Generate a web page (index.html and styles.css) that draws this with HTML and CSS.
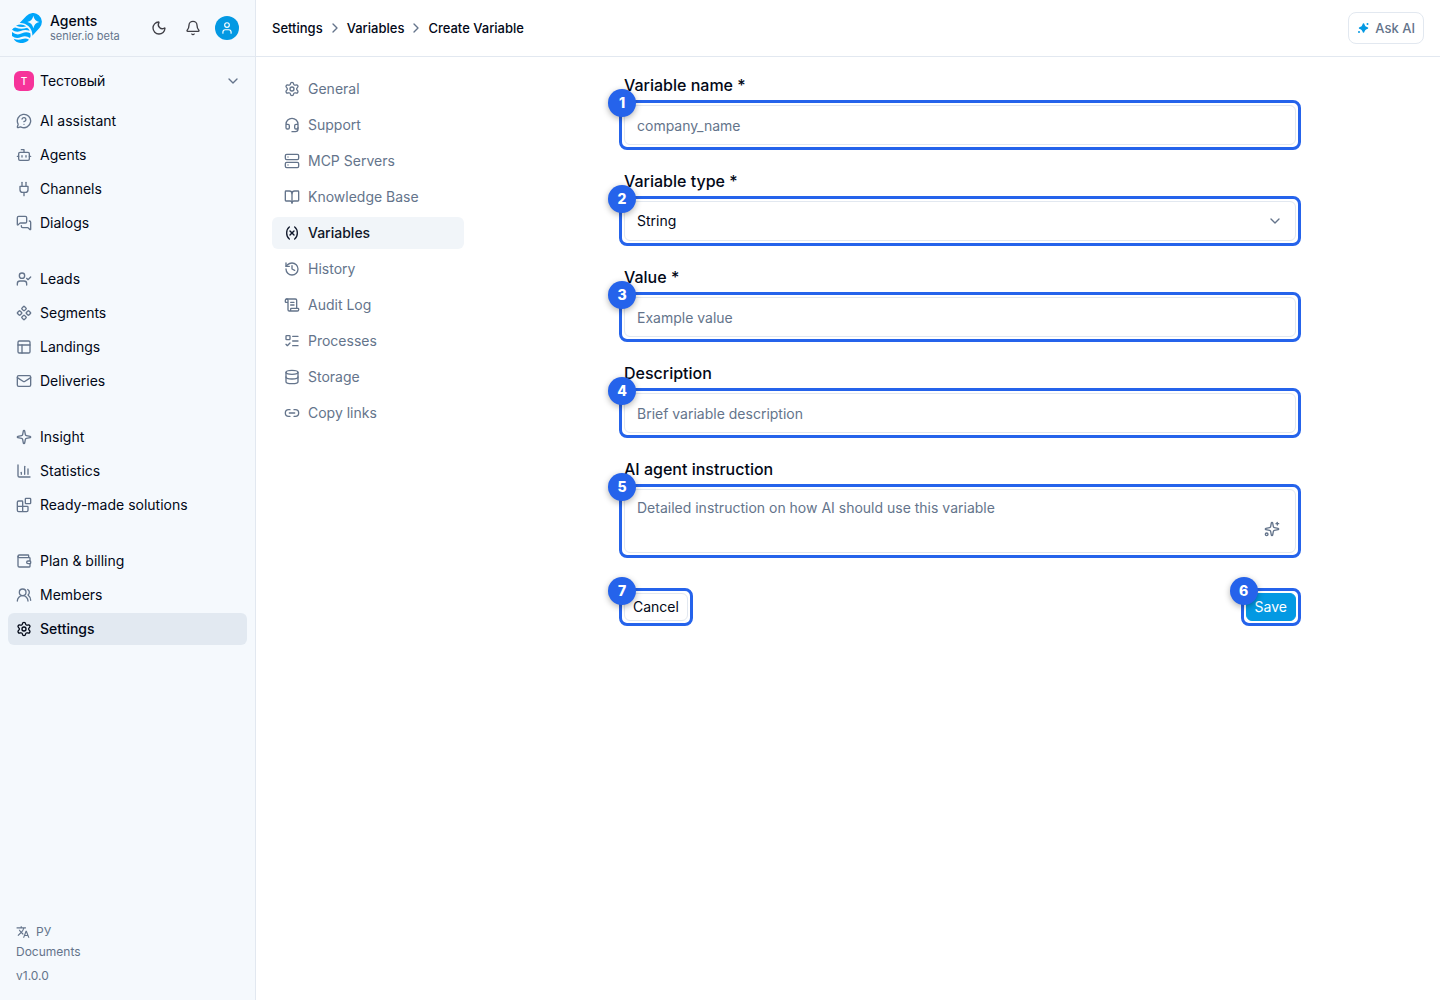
FILE: index.html
```html
<!DOCTYPE html>
<html lang="en">
<head>
<meta charset="utf-8">
<meta name="viewport" content="width=device-width, initial-scale=1">
<title>Create Variable</title>
<link rel="stylesheet" href="styles.css">
</head>
<body>
<div class="app">
  <aside class="sidebar">
    <header class="brand">
      <svg class="logo" viewBox="0 0 90 90" aria-hidden="true">
        <path fill="#00a6fb" d="M43 9A26 26 0 0 1 83 44L61 68A36 36 0 0 0 23 30Z"/>
        <path fill="#f5f9fd" d="M64 8Q67 24 82 27Q67 30 64 46Q61 30 46 27Q61 24 64 8Z"/>
        <path fill="#00a6fb" d="M12 38Q28 30 43 40Q30 45 12 38ZM0 50Q6 42 12 44Q28 50 45 44Q51 47 53 53Q38 48 26 54Q12 60 0 50ZM0 57Q14 69 30 61Q43 55 55 61Q57 68 54 75Q42 66 28 72Q12 79 0 69ZM5 77Q18 83 31 78Q42 74 51 80Q42 90 25 90Q11 88 5 77Z"/>
      </svg>
      <div class="brand-text">
        <strong>Agents</strong>
        <span>senler.io beta</span>
      </div>
      <div class="brand-actions">
        <button class="icon-btn" type="button" aria-label="Dark theme"><svg class="icon" viewBox="0 0 24 24"><path d="M20.985 12.486a9 9 0 1 1-9.473-9.472c.405-.022.617.46.402.803a6 6 0 0 0 8.268 8.268c.344-.215.825-.004.803.401"/></svg></button>
        <button class="icon-btn" type="button" aria-label="Notifications"><svg class="icon" viewBox="0 0 24 24"><path d="M10.268 21a2 2 0 0 0 3.464 0"/><path d="M3.262 15.326A1 1 0 0 0 4 17h16a1 1 0 0 0 .74-1.673C19.41 13.956 18 12.499 18 8A6 6 0 0 0 6 8c0 4.499-1.411 5.956-2.738 7.326"/></svg></button>
        <button class="avatar" type="button" aria-label="Account"><svg class="icon icon-sm" viewBox="0 0 24 24"><path d="M19 21v-2a4 4 0 0 0-4-4H9a4 4 0 0 0-4 4v2"/><circle cx="12" cy="7" r="4"/></svg></button>
      </div>
    </header>

    <button class="workspace" type="button">
      <span class="workspace-badge">T</span>
      <span class="workspace-name">Тестовый</span>
      <svg class="icon" viewBox="0 0 24 24"><path d="m6 9 6 6 6-6"/></svg>
    </button>

    <nav class="main-nav" aria-label="Main">
      <div class="nav-group">
        <a href="#"><svg class="icon" viewBox="0 0 24 24"><path d="M2.992 16.342a2 2 0 0 1 .094 1.167l-1.065 3.29a1 1 0 0 0 1.236 1.168l3.413-.998a2 2 0 0 1 1.099.092 10 10 0 1 0-4.777-4.719"/><path d="M9.09 9a3 3 0 0 1 5.83 1c0 2-3 3-3 3"/><path d="M12 17h.01"/></svg>AI assistant</a>
        <a href="#"><svg class="icon" viewBox="0 0 24 24"><path d="M12 8V4H8"/><rect width="16" height="12" x="4" y="8" rx="2"/><path d="M2 14h2"/><path d="M20 14h2"/><path d="M15 13v2"/><path d="M9 13v2"/></svg>Agents</a>
        <a href="#"><svg class="icon" viewBox="0 0 24 24"><path d="M12 22v-5"/><path d="M9 8V2"/><path d="M15 8V2"/><path d="M18 8v5a4 4 0 0 1-4 4h-4a4 4 0 0 1-4-4V8Z"/></svg>Channels</a>
        <a href="#"><svg class="icon" viewBox="0 0 24 24"><path d="M16 10a2 2 0 0 1-2 2H6.828a2 2 0 0 0-1.414.586l-2.202 2.202A.71.71 0 0 1 2 14.286V4a2 2 0 0 1 2-2h10a2 2 0 0 1 2 2z"/><path d="M20 9a2 2 0 0 1 2 2v10.286a.71.71 0 0 1-1.212.502l-2.202-2.202A2 2 0 0 0 17.172 19H10a2 2 0 0 1-2-2v-1"/></svg>Dialogs</a>
      </div>
      <div class="nav-group">
        <a href="#"><svg class="icon" viewBox="0 0 24 24"><path d="m16 11 2 2 4-4"/><path d="M16 21v-2a4 4 0 0 0-4-4H6a4 4 0 0 0-4 4v2"/><circle cx="9" cy="7" r="4"/></svg>Leads</a>
        <a href="#"><svg class="icon" viewBox="0 0 24 24"><path d="M15.536 11.293a1 1 0 0 0 0 1.414l2.376 2.377a1 1 0 0 0 1.414 0l2.377-2.377a1 1 0 0 0 0-1.414l-2.377-2.377a1 1 0 0 0-1.414 0z"/><path d="M2.297 11.293a1 1 0 0 0 0 1.414l2.377 2.377a1 1 0 0 0 1.414 0l2.377-2.377a1 1 0 0 0 0-1.414L6.088 8.916a1 1 0 0 0-1.414 0z"/><path d="M8.916 17.912a1 1 0 0 0 0 1.415l2.377 2.376a1 1 0 0 0 1.414 0l2.377-2.376a1 1 0 0 0 0-1.415l-2.377-2.376a1 1 0 0 0-1.414 0z"/><path d="M8.916 4.674a1 1 0 0 0 0 1.414l2.377 2.376a1 1 0 0 0 1.414 0l2.377-2.376a1 1 0 0 0 0-1.414l-2.377-2.377a1 1 0 0 0-1.414 0z"/></svg>Segments</a>
        <a href="#"><svg class="icon" viewBox="0 0 24 24"><rect width="18" height="18" x="3" y="3" rx="2"/><path d="M3 9h18"/><path d="M9 21V9"/></svg>Landings</a>
        <a href="#"><svg class="icon" viewBox="0 0 24 24"><path d="m22 7-8.991 5.727a2 2 0 0 1-2.009 0L2 7"/><rect x="2" y="4" width="20" height="16" rx="2"/></svg>Deliveries</a>
      </div>
      <div class="nav-group">
        <a href="#"><svg class="icon" viewBox="0 0 24 24"><path d="M11.017 2.814a1 1 0 0 1 1.966 0l1.051 5.558a2 2 0 0 0 1.594 1.594l5.558 1.051a1 1 0 0 1 0 1.966l-5.558 1.051a2 2 0 0 0-1.594 1.594l-1.051 5.558a1 1 0 0 1-1.966 0l-1.051-5.558a2 2 0 0 0-1.594-1.594l-5.558-1.051a1 1 0 0 1 0-1.966l5.558-1.051a2 2 0 0 0 1.594-1.594z"/></svg>Insight</a>
        <a href="#"><svg class="icon" viewBox="0 0 24 24"><path d="M3 3v16a2 2 0 0 0 2 2h16"/><path d="M18 17V9"/><path d="M13 17V5"/><path d="M8 17v-3"/></svg>Statistics</a>
        <a href="#"><svg class="icon" viewBox="0 0 24 24"><path d="M10 22V7a1 1 0 0 0-1-1H4a2 2 0 0 0-2 2v12a2 2 0 0 0 2 2h12a2 2 0 0 0 2-2v-5a1 1 0 0 0-1-1H2"/><rect x="14" y="2" width="8" height="8" rx="1"/></svg>Ready-made solutions</a>
      </div>
      <div class="nav-group">
        <a href="#"><svg class="icon" viewBox="0 0 24 24"><path d="M19 7V4a1 1 0 0 0-1-1H5a2 2 0 0 0 0 4h15a1 1 0 0 1 1 1v4h-3a2 2 0 0 0 0 4h3a1 1 0 0 0 1-1v-2a1 1 0 0 0-1-1"/><path d="M3 5v14a2 2 0 0 0 2 2h15a1 1 0 0 0 1-1v-4"/></svg>Plan &amp; billing</a>
        <a href="#"><svg class="icon" viewBox="0 0 24 24"><path d="M18 21a8 8 0 0 0-16 0"/><circle cx="10" cy="8" r="5"/><path d="M22 20c0-3.37-2-6.5-4-8a5 5 0 0 0-.45-8.3"/></svg>Members</a>
        <a href="#" class="active" aria-current="page"><svg class="icon" viewBox="0 0 24 24"><path d="M9.671 4.136a2.34 2.34 0 0 1 4.659 0 2.34 2.34 0 0 0 3.319 1.915 2.34 2.34 0 0 1 2.33 4.033 2.34 2.34 0 0 0 0 3.831 2.34 2.34 0 0 1-2.33 4.033 2.34 2.34 0 0 0-3.319 1.915 2.34 2.34 0 0 1-4.659 0 2.34 2.34 0 0 0-3.32-1.915 2.34 2.34 0 0 1-2.33-4.033 2.34 2.34 0 0 0 0-3.831A2.34 2.34 0 0 1 6.35 6.051a2.34 2.34 0 0 0 3.319-1.915"/><circle cx="12" cy="12" r="3"/></svg>Settings</a>
      </div>
    </nav>

    <footer class="sidebar-footer">
      <button class="language" type="button"><svg class="translate" viewBox="0 0 24 24"><path fill="currentColor" d="m12.87 15.07-2.54-2.51.03-.03A17.52 17.52 0 0 0 14.07 6H17V4h-7V2H8v2H1v2h11.17C11.5 7.92 10.44 9.75 9 11.35 8.07 10.32 7.3 9.19 6.69 8h-2c.73 1.63 1.73 3.17 2.98 4.56l-5.09 5.02L4 19l5-5 3.11 3.11zM18.5 10h-2L12 22h2l1.12-3h4.75L21 22h2zm-2.62 7 1.62-4.33L19.12 17z"/></svg>РУ</button>
      <a href="#">Documents</a>
      <span>v1.0.0</span>
    </footer>
  </aside>

  <div class="page">
    <header class="topbar">
      <nav class="breadcrumbs" aria-label="Breadcrumb">
        <a href="#">Settings</a>
        <svg class="icon" viewBox="0 0 24 24"><path d="m9 18 6-6-6-6"/></svg>
        <a href="#">Variables</a>
        <svg class="icon" viewBox="0 0 24 24"><path d="m9 18 6-6-6-6"/></svg>
        <span>Create Variable</span>
      </nav>
      <button class="ask-ai" type="button"><svg class="ask-icon" viewBox="0 0 24 24"><path fill="currentColor" d="M13 2.500Q14.500 2.500 15 5Q16 9 20 10Q22.500 10.500 22.500 12Q22.500 13.500 20 14Q16 15 15 19Q14.500 21.500 13 21.500Q11.500 21.500 11 19Q10 15 6 14Q3.500 13.500 3.500 12Q3.500 10.500 6 10Q10 9 11 5Q11.500 2.500 13 2.500Z"/><circle cx="21" cy="4" r="2" fill="currentColor"/><circle cx="4" cy="20" r="2" fill="currentColor"/></svg>Ask AI</button>
    </header>

    <div class="content">
      <nav class="settings-nav" aria-label="Settings">
        <a href="#"><svg class="icon" viewBox="0 0 24 24"><path d="M9.671 4.136a2.34 2.34 0 0 1 4.659 0 2.34 2.34 0 0 0 3.319 1.915 2.34 2.34 0 0 1 2.33 4.033 2.34 2.34 0 0 0 0 3.831 2.34 2.34 0 0 1-2.33 4.033 2.34 2.34 0 0 0-3.319 1.915 2.34 2.34 0 0 1-4.659 0 2.34 2.34 0 0 0-3.32-1.915 2.34 2.34 0 0 1-2.33-4.033 2.34 2.34 0 0 0 0-3.831A2.34 2.34 0 0 1 6.35 6.051a2.34 2.34 0 0 0 3.319-1.915"/><circle cx="12" cy="12" r="3"/></svg>General</a>
        <a href="#"><svg class="icon" viewBox="0 0 24 24"><path d="M3 11h3a2 2 0 0 1 2 2v3a2 2 0 0 1-2 2H5a2 2 0 0 1-2-2v-5Zm0 0a9 9 0 1 1 18 0m0 0v5a2 2 0 0 1-2 2h-1a2 2 0 0 1-2-2v-3a2 2 0 0 1 2-2h3Z"/><path d="M21 16v2a4 4 0 0 1-4 4h-5"/></svg>Support</a>
        <a href="#"><svg class="icon" viewBox="0 0 24 24"><rect width="20" height="8" x="2" y="2" rx="2"/><rect width="20" height="8" x="2" y="14" rx="2"/><path d="M6 6h.01"/><path d="M6 18h.01"/></svg>MCP Servers</a>
        <a href="#"><svg class="icon" viewBox="0 0 24 24"><path d="M12 7v14"/><path d="M3 18a1 1 0 0 1-1-1V4a1 1 0 0 1 1-1h5a4 4 0 0 1 4 4 4 4 0 0 1 4-4h5a1 1 0 0 1 1 1v13a1 1 0 0 1-1 1h-6a3 3 0 0 0-3 3 3 3 0 0 0-3-3z"/></svg>Knowledge Base</a>
        <a href="#" class="active" aria-current="page"><svg class="icon" viewBox="0 0 24 24"><path d="M8 21s-4-3-4-9 4-9 4-9"/><path d="M16 3s4 3 4 9-4 9-4 9"/><path d="m15 9-6 6"/><path d="m9 9 6 6"/></svg>Variables</a>
        <a href="#"><svg class="icon" viewBox="0 0 24 24"><path d="M3 12a9 9 0 1 0 9-9 9.75 9.75 0 0 0-6.74 2.74L3 8"/><path d="M3 3v5h5"/><path d="M12 7v5l4 2"/></svg>History</a>
        <a href="#"><svg class="icon" viewBox="0 0 24 24"><path d="M15 12h-5"/><path d="M15 8h-5"/><path d="M19 17V5a2 2 0 0 0-2-2H4"/><path d="M8 21h12a2 2 0 0 0 2-2v-1a1 1 0 0 0-1-1H11a1 1 0 0 0-1 1v1a2 2 0 1 1-4 0V5a2 2 0 1 0-4 0v2a1 1 0 0 0 1 1h3"/></svg>Audit Log</a>
        <a href="#"><svg class="icon" viewBox="0 0 24 24"><path d="M13 5h8"/><path d="M13 12h8"/><path d="M13 19h8"/><path d="m3 17 2 2 4-4"/><rect x="3" y="4" width="6" height="6" rx="1"/></svg>Processes</a>
        <a href="#"><svg class="icon" viewBox="0 0 24 24"><ellipse cx="12" cy="5" rx="9" ry="3"/><path d="M3 5v14a9 3 0 0 0 18 0V5"/><path d="M3 12a9 3 0 0 0 18 0"/></svg>Storage</a>
        <a href="#"><svg class="icon" viewBox="0 0 24 24"><path d="M9 17H7A5 5 0 0 1 7 7h2"/><path d="M15 7h2a5 5 0 1 1 0 10h-2"/><path d="M8 12h8"/></svg>Copy links</a>
      </nav>

      <main class="main">
        <form class="form">
          <div class="field">
            <label for="name">Variable name *</label>
            <div class="marked"><input id="name" class="control" type="text" placeholder="company_name"><span class="marker">1</span></div>
          </div>
          <div class="field">
            <label for="type">Variable type *</label>
            <div class="marked"><select id="type" class="control"><option>String</option></select><svg class="icon select-arrow" viewBox="0 0 24 24"><path d="m6 9 6 6 6-6"/></svg><span class="marker">2</span></div>
          </div>
          <div class="field">
            <label for="value">Value *</label>
            <div class="marked"><input id="value" class="control" type="text" placeholder="Example value"><span class="marker">3</span></div>
          </div>
          <div class="field">
            <label for="description">Description</label>
            <div class="marked"><input id="description" class="control" type="text" placeholder="Brief variable description"><span class="marker">4</span></div>
          </div>
          <div class="field">
            <label for="instruction">AI agent instruction</label>
            <div class="marked">
              <textarea id="instruction" class="control" placeholder="Detailed instruction on how AI should use this variable"></textarea>
              <button class="improve" type="button" aria-label="Improve with AI"><svg class="icon" viewBox="0 0 24 24"><path d="M11.017 2.814a1 1 0 0 1 1.966 0l1.051 5.558a2 2 0 0 0 1.594 1.594l5.558 1.051a1 1 0 0 1 0 1.966l-5.558 1.051a2 2 0 0 0-1.594 1.594l-1.051 5.558a1 1 0 0 1-1.966 0l-1.051-5.558a2 2 0 0 0-1.594-1.594l-5.558-1.051a1 1 0 0 1 0-1.966l5.558-1.051a2 2 0 0 0 1.594-1.594z"/><path d="M20 2v4"/><path d="M22 4h-4"/><circle cx="4" cy="20" r="2"/></svg></button>
              <span class="marker">5</span>
            </div>
          </div>
          <div class="form-actions">
            <div class="marked"><button class="btn" type="button">Cancel</button><span class="marker">7</span></div>
            <div class="marked"><button class="btn btn-primary" type="submit">Save</button><span class="marker">6</span></div>
          </div>
        </form>
      </main>
    </div>
  </div>
</div>
</body>
</html>
```
FILE: styles.css
```css
:root {
  --ink: #020817;
  --muted: #64748b;
  --line: #e2e8f0;
  --surface: #f5f9fd;
  --primary: #0399e3;
  --mark: #2563eb;
}

* { box-sizing: border-box; }

body {
  margin: 0;
  background: #fff;
  color: var(--ink);
  font: 14px/20px Inter, sans-serif;
}

a { color: inherit; text-decoration: none; }

button {
  padding: 0;
  border: 0;
  background: none;
  color: inherit;
  font: inherit;
  cursor: pointer;
}

.icon {
  flex: none;
  width: 16px;
  height: 16px;
  fill: none;
  stroke: currentColor;
  stroke-width: 2;
  stroke-linecap: round;
  stroke-linejoin: round;
}

.icon-sm { width: 14px; height: 14px; }

.app { display: flex; min-height: 100vh; }

/* Sidebar */
.sidebar {
  display: flex;
  flex: none;
  flex-direction: column;
  width: 256px;
  border-right: 1px solid var(--line);
  background: var(--surface);
}

.brand {
  display: flex;
  align-items: center;
  gap: 8px;
  height: 57px;
  padding: 0 16px 0 12px;
  border-bottom: 1px solid var(--line);
}

.logo { flex: none; width: 30px; height: 30px; }
.brand-text { display: flex; flex: 1; flex-direction: column; }
.brand-text strong { font-weight: 500; line-height: 16px; }
.brand-text span { color: var(--muted); font-size: 11px; line-height: 14px; }
.brand-actions { display: flex; align-items: center; gap: 10px; color: #3f3f46; }
.icon-btn { display: grid; place-items: center; width: 24px; height: 24px; }

.avatar {
  display: grid;
  place-items: center;
  width: 24px;
  height: 24px;
  border-radius: 50%;
  background: var(--primary);
  color: #fff;
}

.workspace {
  display: flex;
  align-items: center;
  gap: 6px;
  height: 32px;
  margin: 8px 8px 0;
  padding: 0 6px;
  text-align: left;
}

.workspace .icon { color: var(--muted); }
.workspace-name { flex: 1; }

.workspace-badge {
  width: 20px;
  height: 20px;
  border-radius: 6px;
  background: #f6339a;
  color: #fff;
  font-size: 10px;
  font-weight: 500;
  text-align: center;
}

.main-nav {
  display: flex;
  flex: 1;
  flex-direction: column;
  gap: 24px;
  padding: 8px;
}

.nav-group { display: flex; flex-direction: column; gap: 2px; }

.nav-group a,
.settings-nav a {
  display: flex;
  align-items: center;
  gap: 8px;
  height: 32px;
  padding: 0 8px;
  border-radius: 6px;
}

.nav-group .icon { color: var(--muted); }
.nav-group .active { background: #e2e9f1; font-weight: 500; }
.nav-group .active .icon { color: var(--ink); }

.sidebar-footer {
  display: flex;
  flex-direction: column;
  align-items: flex-start;
  padding: 0 16px 14px;
  color: var(--muted);
  font-size: 12px;
}

.language { display: flex; align-items: center; gap: 6px; }
.translate { width: 14px; height: 14px; }
.sidebar-footer span { margin-top: 4px; }

/* Page */
.page { display: flex; flex: 1; flex-direction: column; min-width: 0; }

.topbar {
  display: flex;
  align-items: center;
  justify-content: space-between;
  height: 57px;
  padding: 0 16px;
  border-bottom: 1px solid var(--line);
}

.breadcrumbs {
  display: flex;
  align-items: center;
  gap: 4px;
  font-size: 13px;
  font-weight: 500;
}

.breadcrumbs .icon { color: var(--muted); }

.ask-ai {
  display: flex;
  align-items: center;
  gap: 6px;
  height: 32px;
  padding: 0 8px;
  border: 1px solid var(--line);
  border-radius: 8px;
  color: var(--muted);
  font-size: 13px;
  font-weight: 500;
}

.ask-icon { width: 12px; height: 12px; color: var(--primary); }

.content { display: flex; flex: 1; }

.settings-nav {
  display: flex;
  flex: none;
  flex-direction: column;
  gap: 4px;
  width: 224px;
  padding: 16px;
  color: var(--muted);
}

.settings-nav a { padding: 0 12px; }
.settings-nav .active { background: #f1f5f9; color: #0f172a; font-weight: 500; }

/* Form */
.main { flex: 1; min-width: 0; padding: 16px; }

.form {
  display: flex;
  flex-direction: column;
  gap: 24px;
  max-width: 672px;
  margin: 0 auto;
}

.field { display: flex; flex-direction: column; gap: 8px; }
.field label { font-size: 16px; font-weight: 500; line-height: 24px; }

.marked {
  position: relative;
  display: flex;
  border-radius: 3px;
  outline: 3px solid var(--mark);
  outline-offset: 2px;
}

.marker {
  position: absolute;
  top: -16px;
  left: -16px;
  width: 28px;
  height: 28px;
  border-radius: 50%;
  background: var(--mark);
  box-shadow: 0 2px 6px rgba(0, 0, 0, 0.3);
  color: #fff;
  font-size: 14px;
  font-weight: 800;
  line-height: 28px;
  text-align: center;
}

.control {
  width: 100%;
  height: 40px;
  padding: 0 12px;
  border: 1px solid var(--line);
  border-radius: 6px;
  background: #fff;
  color: var(--ink);
  font: inherit;
  appearance: none;
}

.control::placeholder { color: var(--muted); opacity: 1; }
textarea.control { height: 64px; padding: 8px 12px; resize: none; }

.select-arrow {
  position: absolute;
  top: 12px;
  right: 13px;
  color: var(--muted);
  pointer-events: none;
}

.improve {
  position: absolute;
  right: 16px;
  bottom: 16px;
  display: flex;
  color: var(--muted);
}

.form-actions { display: flex; justify-content: space-between; padding-top: 16px; }

.btn {
  height: 28px;
  padding: 0 8px;
  border: 1px solid var(--line);
  border-radius: 6px;
  background: #fff;
}

.btn-primary { border-color: var(--primary); background: var(--primary); color: #fff; }
```
